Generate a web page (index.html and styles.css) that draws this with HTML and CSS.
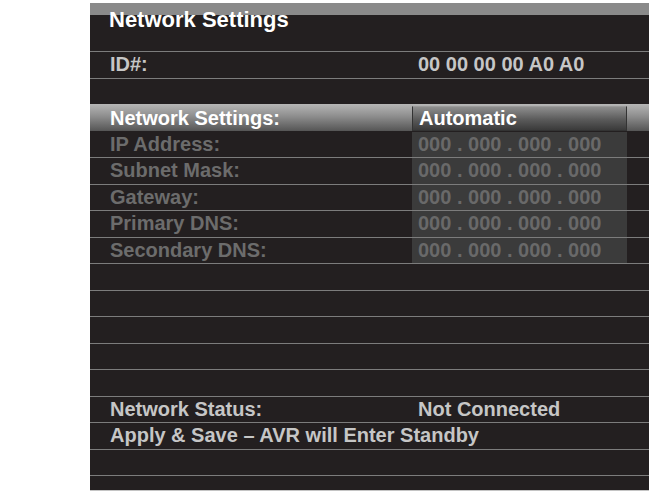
FILE: index.html
```html
<!DOCTYPE html>
<html>
<head>
<meta charset="utf-8">
<link rel="stylesheet" href="styles.css">
</head>
<body>
<div class="panel">
  <div class="title">Network Settings</div>
  <div class="row"><span class="label">ID#:</span><span class="value">00 00 00 00 A0 A0</span></div>
  <div class="row"></div>
  <div class="row selected"><span class="label">Network Settings:</span><span class="value choice">Automatic</span></div>
  <div class="row off first"><span class="label">IP Address:</span><span class="value box">000 . 000 . 000 . 000</span></div>
  <div class="row off"><span class="label">Subnet Mask:</span><span class="value box">000 . 000 . 000 . 000</span></div>
  <div class="row off"><span class="label">Gateway:</span><span class="value box">000 . 000 . 000 . 000</span></div>
  <div class="row off"><span class="label">Primary DNS:</span><span class="value box">000 . 000 . 000 . 000</span></div>
  <div class="row off"><span class="label">Secondary DNS:</span><span class="value box">000 . 000 . 000 . 000</span></div>
  <div class="row"></div>
  <div class="row"></div>
  <div class="row"></div>
  <div class="row"></div>
  <div class="row"></div>
  <div class="row"><span class="label">Network Status:</span><span class="value">Not Connected</span></div>
  <div class="row"><span class="label wide">Apply &amp; Save – AVR will Enter Standby</span></div>
  <div class="row"></div>
  <div class="row last"></div>
</div>
</body>
</html>
```
FILE: styles.css
```css
html, body {
  margin: 0;
  padding: 0;
  background: #ffffff;
}
body {
  padding-top: 3px;
  font-family: "Liberation Sans", Arial, Helvetica, sans-serif;
  font-weight: bold;
}
.panel {
  margin-left: 90px;
  width: 559px;
  height: 487px;
  background: #231f20;
  border-bottom: 1px solid #c4c4c4;
  overflow: hidden;
  display: flex;
  flex-direction: column;
}
.title {
  box-sizing: border-box;
  height: 48px;
  flex: none;
  padding: 6px 0 0 19px;
  font-size: 22px;
  line-height: 22px;
  color: #ffffff;
  background: linear-gradient(#8a8a8a 0, #8a8a8a 12px, #231f20 12px);
}
.row {
  box-sizing: border-box;
  height: 26.5px;
  flex: none;
  border-top: 1px solid #7c7c7c;
  display: grid;
  grid-template-columns: 322px 215px 1fr;
  font-size: 20px;
  color: #c6c6c6;
}
.row.last {
  height: 15px;
}
.row.first {
  border-top-color: transparent;
}
.label {
  padding-left: 20px;
  display: flex;
  align-items: center;
  white-space: nowrap;
}
.label.wide {
  grid-column: 1 / 4;
}
.value {
  padding-left: 6px;
  display: flex;
  align-items: center;
  white-space: nowrap;
}
.selected {
  border-top: none;
  background: linear-gradient(#b6b6b6, #8e8e8e 45%, #555555);
  color: #ffffff;
}
.choice {
  box-sizing: border-box;
  margin: 2px 0 1px;
  padding-left: 6px;
  border: 1px solid #333333;
  border-top-color: #9a9a9a;
  background: linear-gradient(#8e8e8e, #5a5a5a 55%, #3a3a3a);
  color: #ffffff;
}
.off {
  color: #6c6c6c;
}
.box {
  background: #3b3b3b;
  color: #696969;
}
```
